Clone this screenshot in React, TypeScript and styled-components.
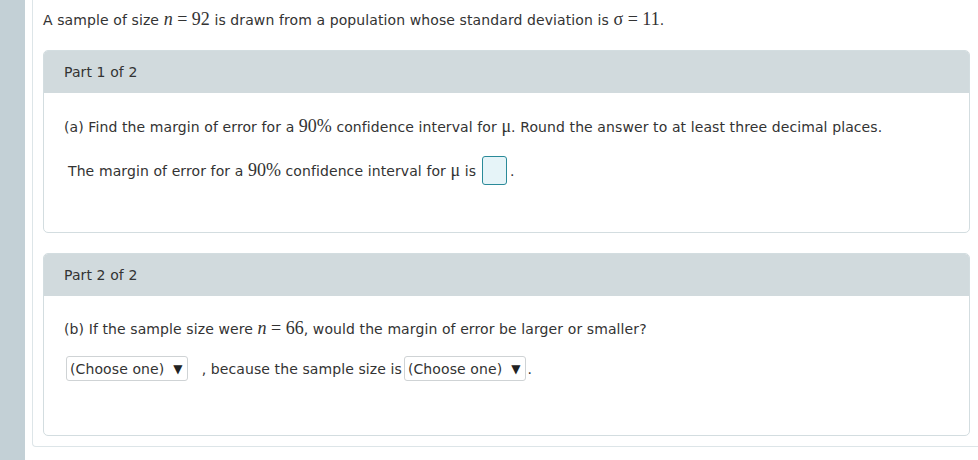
import React from "react";
import styled, { createGlobalStyle } from "styled-components";

const Global = createGlobalStyle`
  html, body { margin: 0; padding: 0; background: #ffffff; overflow: hidden; }
  body { font-family: "DejaVu Sans", Verdana, sans-serif; font-size: 14px; letter-spacing: 0.1px; color: #333; }
`;

const Page = styled.div`
  display: flex;
  width: 978px;
  height: 460px;
  overflow: hidden;
`;

const Sidebar = styled.div`
  width: 25px;
  flex: none;
  background: #c3d0d6;
`;

const Main = styled.div`
  flex: none;
  padding-left: 7px;
`;

const Sheet = styled.div`
  width: 936px;
  border: 1px solid #dde5e8;
  border-top: none;
  border-radius: 0 0 4px 4px;
  padding: 9px 20px 10px 10px;
`;

const Intro = styled.p`
  margin: 0 0 20px;
  line-height: 20px;
`;

const M = styled.span<{ $i?: boolean }>`
  font-family: "Liberation Serif", "Times New Roman", serif;
  font-size: 18px;
  letter-spacing: 0;
  font-style: ${(p) => (p.$i ? "italic" : "normal")};
`;

const Card = styled.section`
  width: 925px;
  border: 1px solid #d3dde0;
  border-radius: 5px;
  overflow: hidden;
  & + & { margin-top: 20px; }
`;

const CardHeader = styled.div`
  height: 42px;
  background: #d1dadd;
  display: flex;
  align-items: center;
  padding-left: 20px;
`;

const CardBody = styled.div<{ $top: number; $bottom: number }>`
  padding: ${(p) => p.$top}px 20px ${(p) => p.$bottom}px 20px;
`;

const Question = styled.p`
  margin: 0;
  line-height: 20px;
`;

const AnswerRow = styled.div<{ $gap: number; $h: number }>`
  display: flex;
  align-items: center;
  margin-top: ${(p) => p.$gap}px;
  height: ${(p) => p.$h}px;
  padding-left: ${(p) => (p.$h > 26 ? 4 : 2)}px;
  white-space: pre;
`;

const AnswerBox = styled.span`
  display: inline-block;
  width: 23px;
  height: 27px;
  border: 1px solid #2a8a99;
  border-radius: 3px;
  background: #e6f4f8;
  margin: 0 3px 0 6px;
`;

const Select = styled.span`
  display: inline-flex;
  align-items: center;
  box-sizing: border-box;
  height: 25px;
  border: 1px solid #cfd3d5;
  border-radius: 3px;
  padding: 0 4px 0 3px;
  margin-right: 2px;
  color: #333;
  background: #fff;
`;

const Sep = styled.span`
  margin: 0 2px 0 12px;
`;

const Arrow = styled.span`
  margin-left: 9px;
  font-size: 12px;
  color: #222;
`;

const Choose = () => (
  <Select>
    (Choose one)<Arrow>▼</Arrow>
  </Select>
);

export default function App() {
  return (
    <>
      <Global />
      <Page>
        <Sidebar />
        <Main>
          <Sheet>
            <Intro>
              A sample of size <M $i>n</M> <M>= 92</M> is drawn from a population whose standard deviation is{" "}
              <M>σ = 11</M>.
            </Intro>
            <Card>
              <CardHeader>Part 1 of 2</CardHeader>
              <CardBody $top={23} $bottom={47}>
                <Question>
                  (a) Find the margin of error for a <M>90%</M> confidence interval for <M>μ</M>. Round the answer to at
                  least three decimal places.
                </Question>
                <AnswerRow $gap={19} $h={29}>
                  The margin of error for a <M>90%</M> confidence interval for <M>μ</M> is
                  <AnswerBox />.
                </AnswerRow>
              </CardBody>
            </Card>
            <Card>
              <CardHeader>Part 2 of 2</CardHeader>
              <CardBody $top={22} $bottom={54}>
                <Question>
                  (b) If the sample size were <M $i>n</M> <M>= 66</M>, would the margin of error be larger or smaller?
                </Question>
                <AnswerRow $gap={17} $h={25}>
                  <Choose />
                  <Sep>, because the sample size is</Sep>
                  <Choose />.
                </AnswerRow>
              </CardBody>
            </Card>
          </Sheet>
        </Main>
      </Page>
    </>
  );
}
